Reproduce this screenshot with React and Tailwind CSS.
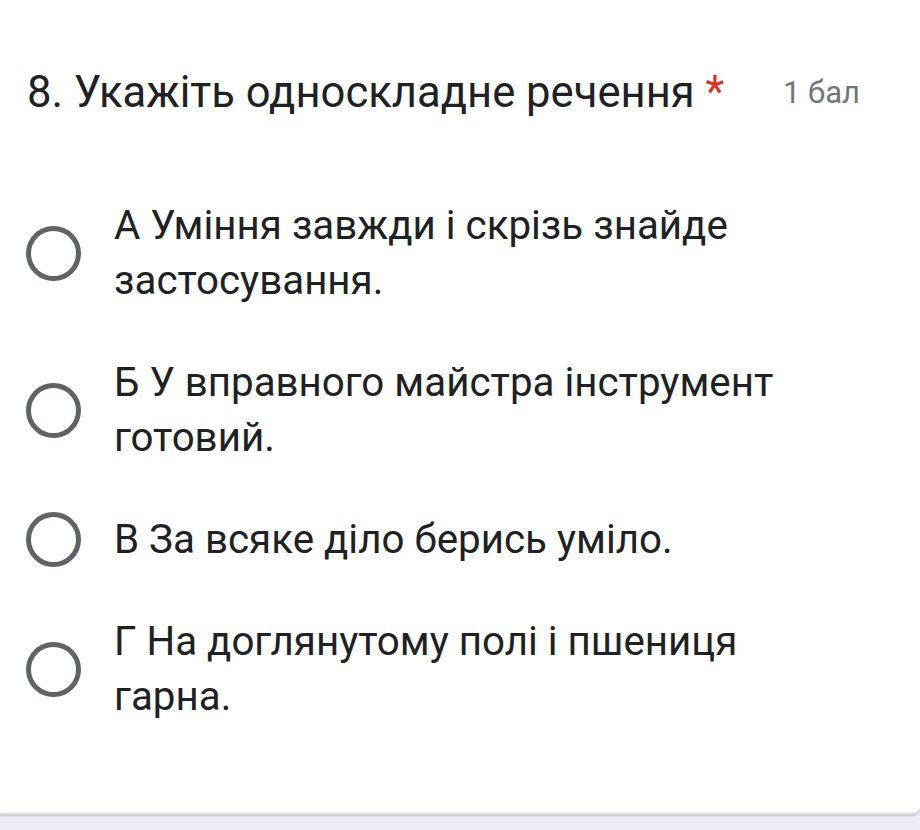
export default function App() {
  const options = [
    "А Уміння завжди і скрізь знайде застосування.",
    "Б У вправного майстра інструмент готовий.",
    "В За всяке діло берись уміло.",
    "Г На доглянутому полі і пшениця гарна.",
  ];

  return (
    <div className="w-[920px] h-[830px] bg-[#f0ebf8] overflow-hidden" style={{ fontFamily: "Roboto, 'Noto Sans', sans-serif" }}>
      <div className="h-[815px] bg-white rounded-br-lg shadow-[0_1px_2px_rgba(0,0,0,0.2)] border-b-2 border-[#dadce0]">
        <div className="flex items-start pl-[27px] pr-[60px] pt-[65px]">
          <div className="text-[43.6px] leading-[56px] text-[#202124]">
            8. Укажіть односкладне речення <span className="text-[#d93025]">*</span>
          </div>
          <div className="ml-auto text-[31px] leading-[56px] text-[#70757a]">1 бал</div>
        </div>

        <div className="flex flex-col gap-[47px] pt-[77px] pl-[26px] pr-[60px]">
          {options.map((text) => (
            <div key={text} className="flex items-center gap-[33px]">
              <div className="w-[55px] h-[55px] shrink-0 rounded-full border-[5px] border-[#5f6368]" />
              <div className="text-[40.3px] leading-[55px] text-[#202124] w-[670px]">{text}</div>
            </div>
          ))}
        </div>
      </div>
    </div>
  );
}
